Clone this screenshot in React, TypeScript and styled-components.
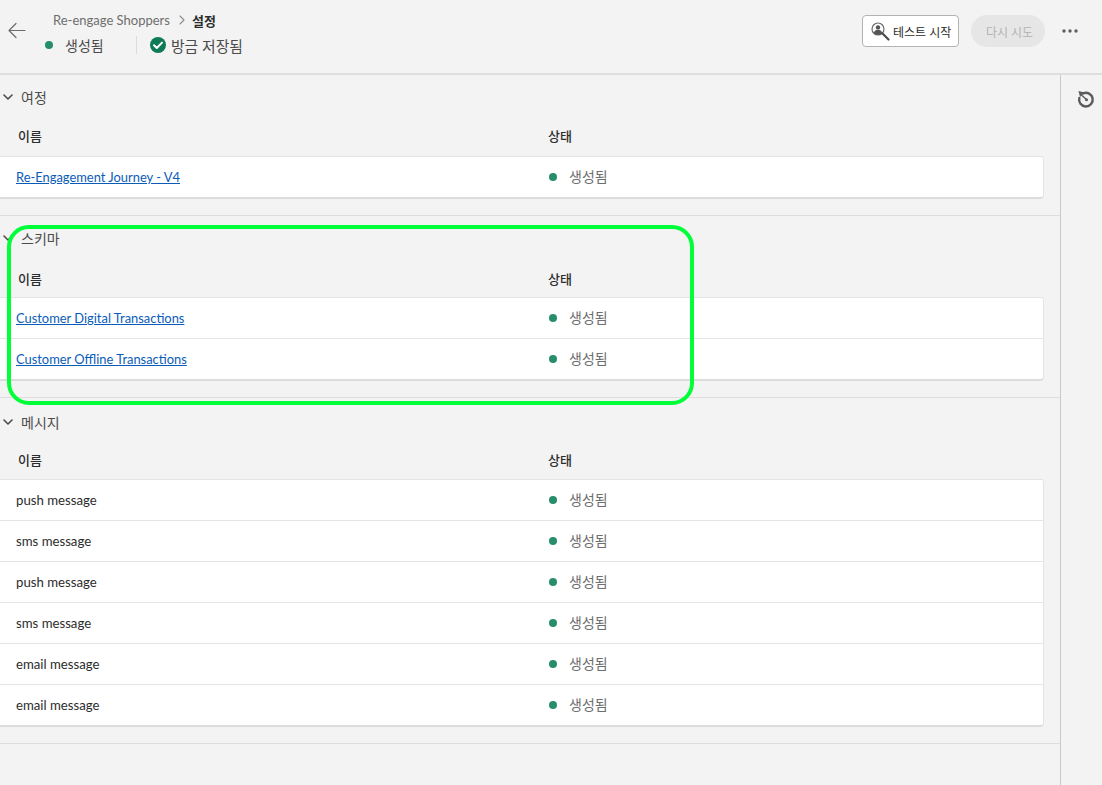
import styled, { createGlobalStyle } from 'styled-components';

const FONT = `Lato, "Noto Sans CJK KR", sans-serif`;

const GlobalStyle = createGlobalStyle`
  html, body { margin: 0; padding: 0; background: #f3f3f3; }
  body { font-family: ${FONT}; overflow: hidden; }
  * { box-sizing: border-box; }
`;

const Page = styled.div`
  position: relative;
  width: 1102px;
  height: 785px;
  overflow: hidden;
  background: #f3f3f3;
  color: #2c2c2c;
`;

const Header = styled.header`
  display: flex;
  height: 75px;
  padding: 0 23px 0 7px;
  border-bottom: 2px solid #dedede;
`;

const BackButton = styled.div`
  width: 20px;
  height: 20px;
  margin-top: 20px;
  margin-right: 26px;
  color: #6d6d6d;
`;

const TitleBlock = styled.div`
  display: flex;
  flex-direction: column;
  flex: 1;
`;

const Crumbs = styled.div`
  display: flex;
  align-items: center;
  height: 20px;
  margin-top: 10px;
  font-size: 13px;
  color: #6e6e6e;
`;

const CrumbSep = styled.span`
  display: flex;
  margin: 0 6px 0 8px;
  color: #8e8e8e;
`;

const CrumbCurrent = styled.span`
  font-size: 13px;
  font-weight: 700;
  color: #2c2c2c;
`;

const StatusLine = styled.div`
  display: flex;
  align-items: center;
  height: 28px;
  margin-top: 1px;
  margin-left: -8px;
`;

const HeaderStatus = styled.div`
  display: flex;
  align-items: center;
  width: 91px;
  font-size: 14px;
  color: #4b4b4b;
`;

const Dot = styled.span`
  flex: none;
  width: 8px;
  height: 8px;
  margin-right: 12px;
  border-radius: 50%;
  background: #268e6c;
`;

const Divider = styled.span`
  width: 1px;
  height: 18px;
  margin-right: 13px;
  background: #dcdcdc;
`;

const Saved = styled.div`
  display: flex;
  align-items: center;
  gap: 5px;
  font-size: 14.8px;
  color: #4b4b4b;
`;

const Actions = styled.div`
  display: flex;
  align-items: flex-start;
  padding-top: 15px;
`;

const OutlineButton = styled.button`
  display: flex;
  align-items: center;
  gap: 3px;
  width: 97px;
  height: 32px;
  padding: 0 0 0 8px;
  border: 1px solid #b3b3b3;
  border-radius: 4px;
  background: #fff;
  font-family: ${FONT};
  font-size: 12px;
  color: #2c2c2c;
`;

const DisabledButton = styled.button`
  width: 74px;
  height: 32px;
  margin-left: 12px;
  padding: 0 0 0 3px;
  border: 0;
  border-radius: 16px;
  background: #e6e6e6;
  font-family: ${FONT};
  font-size: 12px;
  color: #b3b3b3;
`;

const MoreButton = styled.div`
  display: flex;
  justify-content: center;
  align-items: center;
  width: 18px;
  height: 32px;
  margin-left: 16px;
  color: #5f5f5f;
`;

const Body = styled.div`
  display: flex;
  height: 710px;
`;

const Main = styled.main`
  width: 1061px;
  border-right: 1px solid #c8c8c8;
`;

const Rail = styled.aside`
  flex: 1;
  padding: 15px 0 0 16px;
  color: #5b5b5b;
`;

const Section = styled.section<{ $top: number; $height: number }>`
  height: ${(p) => p.$height}px;
  padding: ${(p) => p.$top}px 16px 0 0;
  border-bottom: 1px solid #dedede;
`;

const SectionHead = styled.div`
  display: flex;
  align-items: center;
  height: 20px;
  padding-left: 3px;
`;

const Chevron = styled.span`
  display: flex;
  width: 18px;
  color: #4b4b4b;
`;

const SectionTitle = styled.h2`
  margin: 0;
  font-size: 14px;
  font-weight: 400;
  color: #4b4b4b;
`;

const ColumnHead = styled.div<{ $gap: number; $after: number }>`
  display: grid;
  grid-template-columns: 530px 1fr;
  height: 20px;
  margin-top: ${(p) => p.$gap}px;
  margin-bottom: ${(p) => p.$after}px;
  padding-left: 18px;
  font-size: 13px;
  font-weight: 500;
  line-height: 20px;
  color: #2c2c2c;
`;

const Card = styled.div`
  border-right: 1px solid #e4e4e4;
  border-bottom: 2px solid #dcdcdc;
  border-radius: 0 4px 4px 0;
  background: #fff;
`;

const Row = styled.div`
  display: grid;
  grid-template-columns: 533px 1fr;
  align-items: center;
  height: 41px;
  padding-left: 16px;
  border-top: 1px solid #e4e4e4;
  font-size: 13.2px;
  color: #2c2c2c;
`;

const RowLink = styled.a`
  font-size: 12.9px;
  color: #0a5cb8;
  text-decoration: underline;
`;

const RowStatus = styled.div`
  display: flex;
  align-items: center;
  font-size: 14px;
  color: #6e6e6e;
`;

const StatusLabel = styled.span`
  margin-bottom: 2px;
`;

const Callout = styled.div`
  position: absolute;
  left: 7px;
  top: 225px;
  width: 687px;
  height: 180px;
  border: 4px solid #00ff38;
  border-radius: 22px;
  pointer-events: none;
`;

type RowData = { name: string; link?: boolean };

const journeys: RowData[] = [{ name: 'Re-Engagement Journey - V4', link: true }];
const schemas: RowData[] = [
  { name: 'Customer Digital Transactions', link: true },
  { name: 'Customer Offline Transactions', link: true },
];
const messages: RowData[] = [
  { name: 'push message' },
  { name: 'sms message' },
  { name: 'push message' },
  { name: 'sms message' },
  { name: 'email message' },
  { name: 'email message' },
];

function ObjectSection({
  title,
  rows,
  top,
  height,
  gap,
  after,
}: {
  title: string;
  rows: RowData[];
  top: number;
  height: number;
  gap: number;
  after: number;
}) {
  return (
    <Section $top={top} $height={height}>
      <SectionHead>
        <Chevron>
          <svg width="10" height="10" viewBox="0 0 10 10" fill="none">
            <path d="M1 3l4 4 4-4" stroke="currentColor" strokeWidth="1.6" strokeLinecap="round" strokeLinejoin="round" />
          </svg>
        </Chevron>
        <SectionTitle>{title}</SectionTitle>
      </SectionHead>
      <ColumnHead $gap={gap} $after={after}>
        <span>이름</span>
        <span>상태</span>
      </ColumnHead>
      <Card>
        {rows.map((row, i) => (
          <Row key={i}>
            <div>{row.link ? <RowLink>{row.name}</RowLink> : row.name}</div>
            <RowStatus>
              <Dot />
              <StatusLabel>생성됨</StatusLabel>
            </RowStatus>
          </Row>
        ))}
      </Card>
    </Section>
  );
}

export default function App() {
  return (
    <Page>
      <GlobalStyle />
      <Header>
        <BackButton>
          <svg width="20" height="20" viewBox="0 0 20 20" fill="none">
            <path d="M18 10.5H2M9 3.5l-7 7 7 7" stroke="currentColor" strokeWidth="1.2" strokeLinecap="round" strokeLinejoin="round" />
          </svg>
        </BackButton>
        <TitleBlock>
          <Crumbs>
            Re-engage Shoppers
            <CrumbSep>
              <svg width="8" height="10" viewBox="0 0 8 10" fill="none">
                <path d="M2 1l4 4-4 4" stroke="currentColor" strokeWidth="1.1" strokeLinecap="round" strokeLinejoin="round" />
              </svg>
            </CrumbSep>
            <CrumbCurrent>설정</CrumbCurrent>
          </Crumbs>
          <StatusLine>
            <HeaderStatus>
              <Dot />
              생성됨
            </HeaderStatus>
            <Divider />
            <Saved>
              <svg width="16" height="16" viewBox="0 0 16 16">
                <circle cx="8" cy="8" r="8" fill="#0f7a56" />
                <path d="M4 8.2l2.8 2.8L12 5.6" fill="none" stroke="#fff" strokeWidth="2" strokeLinecap="round" strokeLinejoin="round" />
              </svg>
              방금 저장됨
            </Saved>
          </StatusLine>
        </TitleBlock>
        <Actions>
          <OutlineButton>
            <svg width="19" height="19" viewBox="0 0 19 19" fill="none">
              <circle cx="7" cy="7" r="6" stroke="#6a6a6a" strokeWidth="1.2" />
              <circle cx="7" cy="5.4" r="2.2" fill="#555" />
              <path d="M2.8 11c.5-2.2 2.2-3.2 4.2-3.2s3.7 1 4.2 3.2A6 6 0 0 1 7 13a6 6 0 0 1-4.2-2z" fill="#555" />
              <path d="M11.5 11.5l6 6" stroke="#4b4b4b" strokeWidth="2.2" strokeLinecap="round" />
            </svg>
            테스트 시작
          </OutlineButton>
          <DisabledButton disabled>다시 시도</DisabledButton>
          <MoreButton>
            <svg width="16" height="4" viewBox="0 0 16 4" fill="currentColor">
              <circle cx="2" cy="2" r="1.7" />
              <circle cx="8" cy="2" r="1.7" />
              <circle cx="14" cy="2" r="1.7" />
            </svg>
          </MoreButton>
        </Actions>
      </Header>
      <Body>
        <Main>
          <ObjectSection title="여정" rows={journeys} top={12} height={141} gap={19} after={10} />
          <ObjectSection title="스키마" rows={schemas} top={12} height={182} gap={21} after={8} />
          <ObjectSection title="메시지" rows={messages} top={14} height={346} gap={18} after={9} />
        </Main>
        <Rail>
          <svg width="18" height="18" viewBox="0 0 18 18" fill="none">
            <path d="M6.2 3.4A6.8 6.8 0 1 1 2.3 8" stroke="currentColor" strokeWidth="2.4" strokeLinecap="round" />
            <path d="M1.5 1l6 1.5-4.5 4.5z" fill="currentColor" />
            <path d="M5 5.5l4.4 4" stroke="currentColor" strokeWidth="1.4" strokeLinecap="round" />
            <circle cx="9.5" cy="9.8" r="1.5" fill="currentColor" />
          </svg>
        </Rail>
      </Body>
      <Callout />
    </Page>
  );
}
